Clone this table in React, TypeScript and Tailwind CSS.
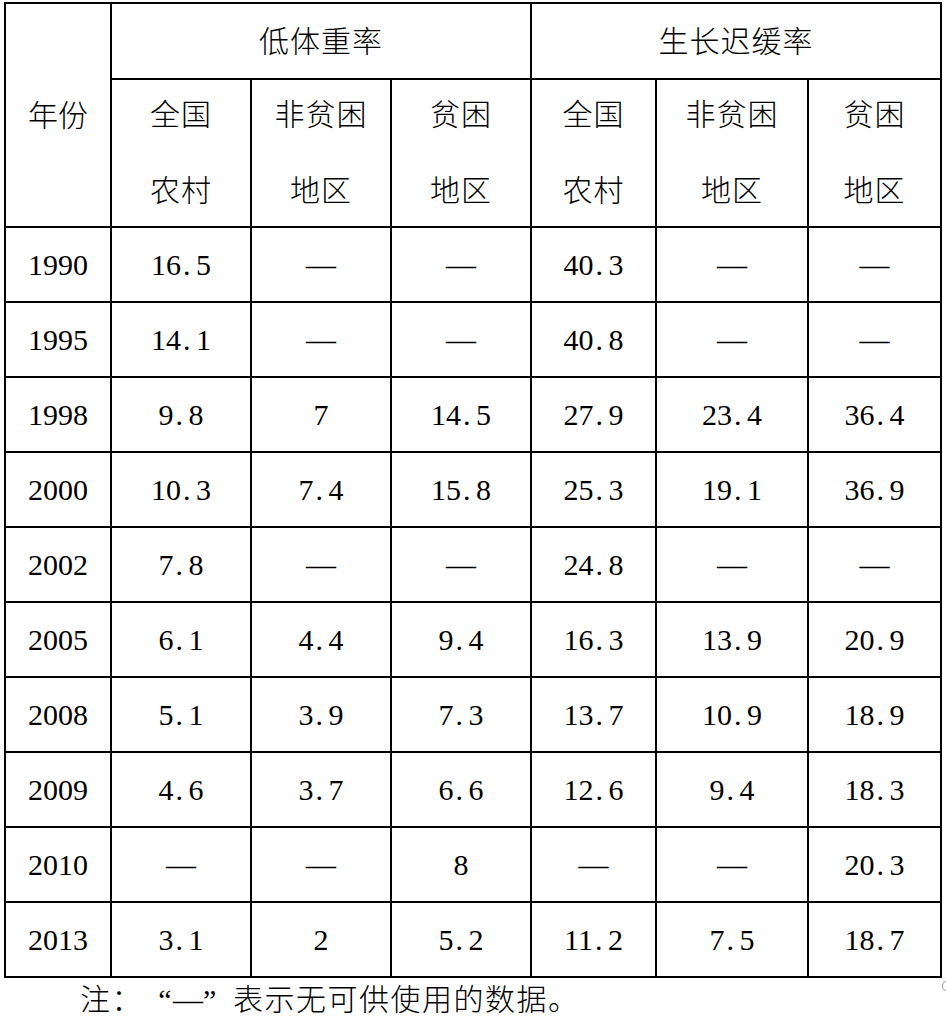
import React from "react";

type Row = { year: string; vals: string[] };

const rows: Row[] = [
    { year: "1990", vals: ["16.5", "—", "—", "40.3", "—", "—"] },
    { year: "1995", vals: ["14.1", "—", "—", "40.8", "—", "—"] },
    { year: "1998", vals: ["9.8", "7", "14.5", "27.9", "23.4", "36.4"] },
    { year: "2000", vals: ["10.3", "7.4", "15.8", "25.3", "19.1", "36.9"] },
    { year: "2002", vals: ["7.8", "—", "—", "24.8", "—", "—"] },
    { year: "2005", vals: ["6.1", "4.4", "9.4", "16.3", "13.9", "20.9"] },
    { year: "2008", vals: ["5.1", "3.9", "7.3", "13.7", "10.9", "18.9"] },
    { year: "2009", vals: ["4.6", "3.7", "6.6", "12.6", "9.4", "18.3"] },
    { year: "2010", vals: ["—", "—", "8", "—", "—", "20.3"] },
    { year: "2013", vals: ["3.1", "2", "5.2", "11.2", "7.5", "18.7"] },
];

const subHeads = [
    ["全国", "农村"],
    ["非贫困", "地区"],
    ["贫困", "地区"],
    ["全国", "农村"],
    ["非贫困", "地区"],
    ["贫困", "地区"],
];

// SimSun-style numbers: the dot takes half an em like a digit
function Num({ value }: { value: string }) {
    const parts = value.split(".");
    if (parts.length < 2) return <span>{value}</span>;
    return (
        <span>
            {parts[0]}
            <span className="inline-block w-[0.5em] pl-[2px] text-left">.</span>
            {parts[1]}
        </span>
    );
}

function Cell({ children, className = "" }: { children: React.ReactNode; className?: string }) {
    return <div className={`bg-white flex items-center justify-center ${className}`}>{children}</div>;
}

export default function App() {
    return (
        <div className="w-[946px] h-[1016px] bg-white text-black overflow-hidden font-['Liberation_Serif','Noto_Sans_CJK_SC',serif] font-light text-[30px]">
            <div className="pt-[2px] pl-[4px]">
                <div className="inline-grid bg-black p-[2px] gap-[2px] grid-cols-[104px_138px_138px_138px_123px_150px_131px] grid-rows-[74px_146px_repeat(10,73px)]">
                    <Cell className="row-span-2">年份</Cell>
                    <Cell className="col-span-3 tracking-[1px]">低体重率</Cell>
                    <Cell className="col-span-3 tracking-[1px]">生长迟缓率</Cell>
                    {subHeads.map((h, i) => (
                        <Cell key={i} className="flex-col leading-[76px] tracking-[1px]">
                            <span>{h[0]}</span>
                            <span>{h[1]}</span>
                        </Cell>
                    ))}
                    {rows.map(r => (
                        <React.Fragment key={r.year}>
                            <Cell>{r.year}</Cell>
                            {r.vals.map((v, i) => (
                                <Cell key={i}>
                                    <Num value={v} />
                                </Cell>
                            ))}
                        </React.Fragment>
                    ))}
                </div>
            </div>
            <div className="relative">
                <p className="pl-[80px] pt-[7px] leading-[30px] tracking-[1.5px] whitespace-nowrap">
                    注：<span className="inline-block w-[1em] text-right">“</span>
                    <span className="inline-block w-[1em] text-center">—</span>
                    <span className="inline-block w-[1em] text-left">”</span>表示无可供使用的数据。
                </p>
                <span className="absolute left-[942px] top-[3px] w-[8px] h-[10px] rounded-full border border-gray-400"></span>
            </div>
        </div>
    );
}
